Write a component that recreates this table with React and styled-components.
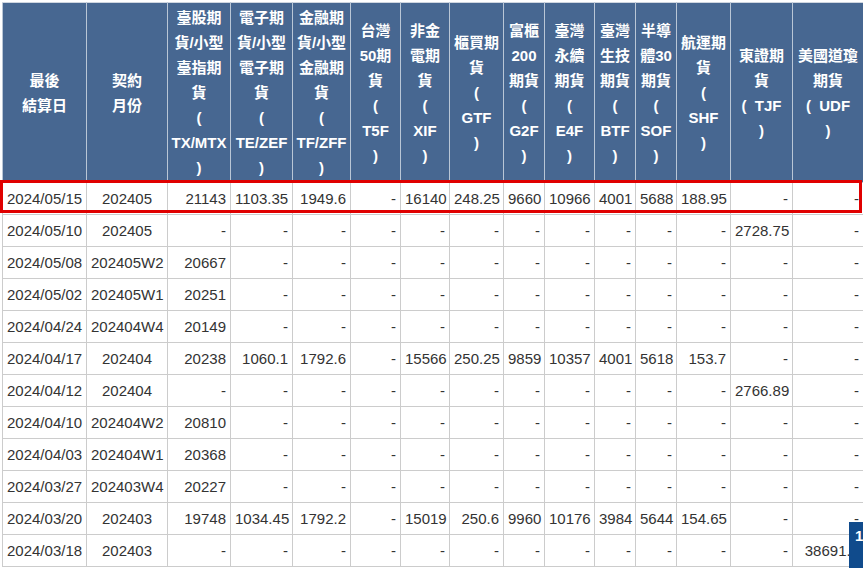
import { styled, createGlobalStyle } from "styled-components";

const GlobalStyle = createGlobalStyle`
  html, body {
    margin: 0;
    padding: 0;
    background: #fff;
    overflow: hidden;
  }
  body {
    font-family: "Liberation Sans", Arial, "Noto Sans CJK TC", sans-serif;
  }
`;

const Page = styled.div`
  position: relative;
  width: 863px;
  height: 568px;
  overflow: hidden;
  padding: 2px 0 0 2px;
  box-sizing: border-box;
`;

const Table = styled.table`
  width: 861px;
  table-layout: fixed;
  border-collapse: collapse;
  font-size: 15px;
  color: #333;
`;

const HeadCell = styled.th`
  background: #476791;
  color: #fff;
  font-weight: bold;
  font-family: "Liberation Sans", Arial, "Noto Sans CJK TC", sans-serif;
  line-height: 25px;
  padding: 2px 0;
  text-align: center;
  vertical-align: middle;
  border: 1px solid #b9c6d6;
  border-top-color: #cfd6e0;
  white-space: nowrap;
`;

const Row = styled.tr``;

const Cell = styled.td`
  height: 31px;
  padding: 0 4px;
  border: 1px solid #cccccc;
  text-align: ${(p) => p.$align || "right"};
  white-space: nowrap;
  overflow: hidden;
  vertical-align: middle;
`;

const Highlight = styled.div`
  position: absolute;
  left: 0;
  top: 180px;
  width: 862px;
  height: 33px;
  border: 3px solid #e00000;
  box-sizing: border-box;
  pointer-events: none;
`;

const TopButton = styled.div`
  position: absolute;
  left: 849px;
  top: 522px;
  width: 44px;
  height: 50px;
  background: #104b8c;
  color: #fff;
  font-size: 15px;
  font-weight: bold;
  padding: 5px 0 0 6px;
  box-sizing: border-box;
`;

const widths = [84, 81, 63, 62, 58, 50, 49, 54, 41, 50, 41, 41, 54, 62, 71];

const headers = [
  ["最後", "結算日"],
  ["契約", "月份"],
  ["臺股期", "貨/小型", "臺指期", "貨", "(", "TX/MTX", ")"],
  ["電子期", "貨/小型", "電子期", "貨", "(", "TE/ZEF", ")"],
  ["金融期", "貨/小型", "金融期", "貨", "(", "TF/ZFF", ")"],
  ["台灣", "50期", "貨", "(", "T5F", ")"],
  ["非金", "電期", "貨", "(", "XIF", ")"],
  ["櫃買期", "貨", "(", "GTF", ")"],
  ["富櫃", "200", "期貨", "(", "G2F", ")"],
  ["臺灣", "永續", "期貨", "(", "E4F", ")"],
  ["臺灣", "生技", "期貨", "(", "BTF", ")"],
  ["半導", "體30", "期貨", "(", "SOF", ")"],
  ["航運期", "貨", "(", "SHF", ")"],
  ["東證期", "貨", "(\u00a0 TJF", ")"],
  ["美國道瓊", "期貨", "(\u00a0 UDF", ")"],
];

const dash = (n) => Array(n).fill("-");

const rows = [
  ["2024/05/15", "202405", "21143", "1103.35", "1949.6", "-", "16140", "248.25", "9660", "10966", "4001", "5688", "188.95", "-", "-"],
  ["2024/05/10", "202405", ...dash(11), "2728.75", "-"],
  ["2024/05/08", "202405W2", "20667", ...dash(12)],
  ["2024/05/02", "202405W1", "20251", ...dash(12)],
  ["2024/04/24", "202404W4", "20149", ...dash(12)],
  ["2024/04/17", "202404", "20238", "1060.1", "1792.6", "-", "15566", "250.25", "9859", "10357", "4001", "5618", "153.7", "-", "-"],
  ["2024/04/12", "202404", ...dash(11), "2766.89", "-"],
  ["2024/04/10", "202404W2", "20810", ...dash(12)],
  ["2024/04/03", "202404W1", "20368", ...dash(12)],
  ["2024/03/27", "202403W4", "20227", ...dash(12)],
  ["2024/03/20", "202403", "19748", "1034.45", "1792.2", "-", "15019", "250.6", "9960", "10176", "3984", "5644", "154.65", "-", "-"],
  ["2024/03/18", "202403", ...dash(12), "38691.1"],
];

function App() {
  return (
    <>
      <GlobalStyle />
      <Page>
        <Table>
          <colgroup>
            {widths.map((w, i) => (
              <col key={i} style={{ width: w }} />
            ))}
          </colgroup>
          <thead>
            <tr>
              {headers.map((lines, i) => (
                <HeadCell key={i}>
                  {lines.map((l, j) => (
                    <div key={j}>{l}</div>
                  ))}
                </HeadCell>
              ))}
            </tr>
          </thead>
          <tbody>
            {rows.map((r, i) => (
              <Row key={i}>
                {r.map((v, j) => (
                  <Cell key={j} $align={j === 0 ? "left" : j === 1 ? "center" : "right"}>
                    {v}
                  </Cell>
                ))}
              </Row>
            ))}
          </tbody>
        </Table>
        <Highlight />
        <TopButton>1</TopButton>
      </Page>
    </>
  );
}

export default App;
